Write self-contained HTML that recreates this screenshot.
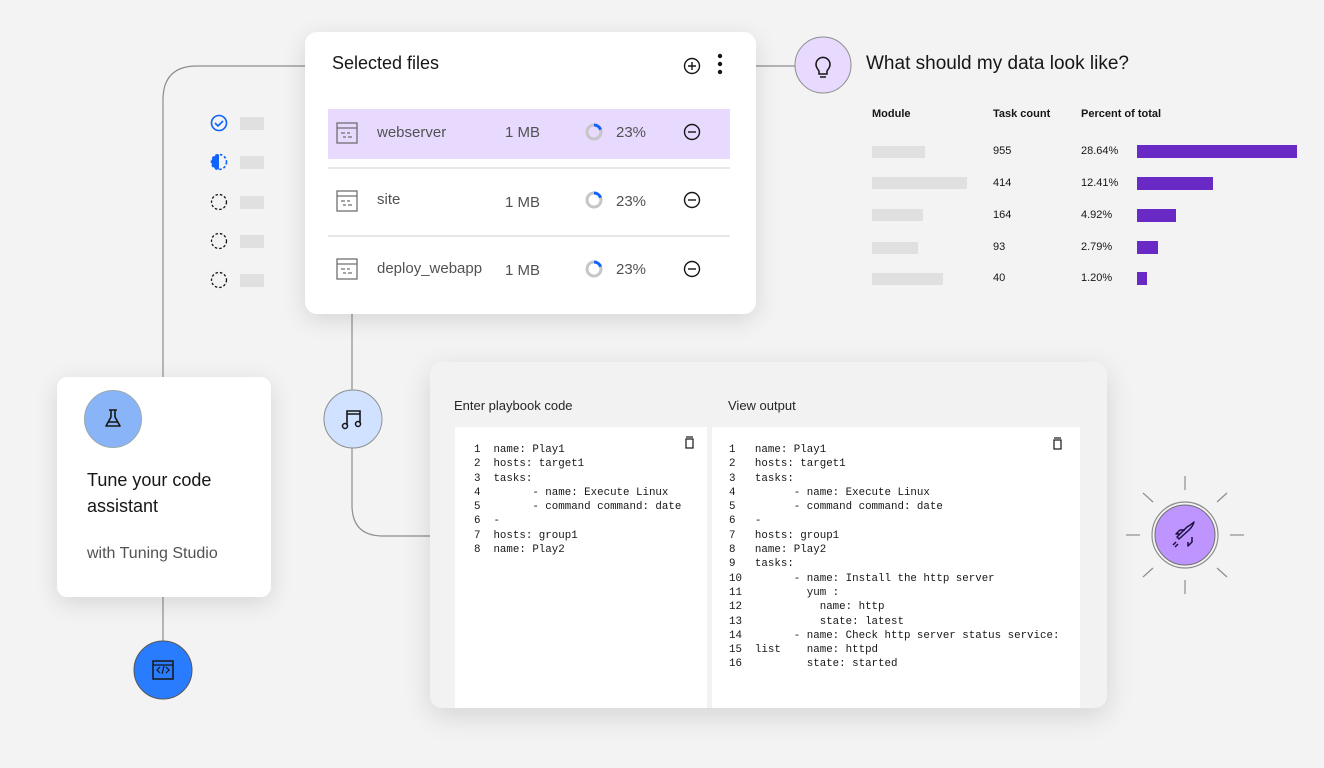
<!DOCTYPE html>
<html><head><meta charset="utf-8"><style>
*{margin:0;padding:0;box-sizing:border-box}
body{width:1324px;height:768px;background:#f3f3f3;position:relative;overflow:hidden;font-family:"Liberation Sans",sans-serif;color:#161616}
.abs{position:absolute}
.card{position:absolute;background:#fff;border-radius:12px;box-shadow:0 6px 24px rgba(0,0,0,0.12)}
.t{position:absolute;white-space:nowrap}
.code{position:absolute;font-family:"Liberation Mono",monospace;font-size:10.8px;line-height:14.3px;white-space:pre;color:#161616}
.gb{position:absolute;background:#e0e0e0;height:12px}
.pb{position:absolute;background:#6929c4;height:13px}
.ct{position:absolute;font-size:11px;color:#161616}
</style></head><body>
<svg class="abs" style="left:0;top:0" width="1324" height="768">
<g fill="none" stroke="#8d8d8d" stroke-width="1.2">
<path d="M163 377 V100 Q163 66 197 66 H305"/>
<path d="M756 66 H795"/>
<path d="M352 314 V390"/>
<path d="M352 448 V505 Q352 536 383 536 H430"/>
<path d="M163 597 V642"/>
<g stroke="#8d8d8d"><path d="M1185 476 V490"/><path d="M1185 580 V594"/><path d="M1126 535 H1140"/><path d="M1230 535 H1244"/><path d="M1143 493 L1153 502"/><path d="M1227 493 L1217 502"/><path d="M1143 577 L1153 568"/><path d="M1227 577 L1217 568"/></g>
</g>
<circle cx="823" cy="65" r="28" fill="#e8daff" stroke="#8d8d8d"/>
<path d="M817 68 a7 7 0 1 1 12 0 l-2 3 v3 h-8 v-3z M820 77 h6" fill="none" stroke="#161616" stroke-width="1.5"/>
<circle cx="353" cy="419" r="29" fill="#d0e2ff" stroke="#8d8d8d"/>
<path d="M347 425 V411 H360 V423 M347 414 H360" fill="none" stroke="#161616" stroke-width="1.6"/>
<circle cx="345" cy="426" r="2.5" fill="none" stroke="#161616" stroke-width="1.5"/><circle cx="358" cy="424" r="2.5" fill="none" stroke="#161616" stroke-width="1.5"/>
<circle cx="163" cy="670" r="29" fill="#2a7cff" stroke="#555"/>
<rect x="153" y="661" width="20" height="18" fill="none" stroke="#161616" stroke-width="1.5"/><path d="M153 665 H173 M160 667 l-3 3 3 3 M166 667 l3 3 -3 3 M164 666 l-2 8" fill="none" stroke="#161616" stroke-width="1.2"/>
<circle cx="1185" cy="535" r="33" fill="none" stroke="#8d8d8d" stroke-width="1.2"/>
<circle cx="1185" cy="535" r="30" fill="#be95ff" stroke="#6f6f6f" stroke-width="1"/>
<path d="M1177 537 l10 -10 q5 -3 7 -5 q-1 4 -5 8 l-10 9z M1180 534 l-4 0 4 -4 5 0 M1188 542 l0 4 4 -4 0 -5 M1176 542 l-3 3 M1178 544 l-3 3" fill="none" stroke="#1c1042" stroke-width="1.5" stroke-linejoin="round"/>
<circle cx="219" cy="123" r="7.5" fill="none" stroke="#0f62fe" stroke-width="1.6"/><path d="M215 123 l3 3 5 -5" fill="none" stroke="#0f62fe" stroke-width="1.6"/>
<path d="M219 154.5 a7.5 7.5 0 0 0 0 15z" fill="#0f62fe"/><circle cx="219" cy="162" r="7.5" fill="none" stroke="#0f62fe" stroke-width="1.6" stroke-dasharray="2.5 2"/>
<circle cx="219" cy="202" r="7.5" fill="none" stroke="#161616" stroke-width="1.3" stroke-dasharray="2.5 2"/>
<circle cx="219" cy="241" r="7.5" fill="none" stroke="#161616" stroke-width="1.3" stroke-dasharray="2.5 2"/>
<circle cx="219" cy="280" r="7.5" fill="none" stroke="#161616" stroke-width="1.3" stroke-dasharray="2.5 2"/>
<g fill="#e0e0e0"><rect x="240" y="117" width="24" height="13"/><rect x="240" y="156" width="24" height="13"/><rect x="240" y="196" width="24" height="13"/><rect x="240" y="235" width="24" height="13"/><rect x="240" y="274" width="24" height="13"/></g>
</svg>

<div class="card" style="left:305px;top:32px;width:451px;height:282px">
<div class="t" style="left:27px;top:21px;font-size:18px">Selected files</div>
<svg class="abs" style="left:0;top:0" width="451" height="282">
<circle cx="387" cy="34" r="7.5" fill="none" stroke="#161616" stroke-width="1.4"/><path d="M383 34h8M387 30v8" stroke="#161616" stroke-width="1.4"/>
<circle cx="415" cy="24" r="2.2" fill="#161616"/><circle cx="415" cy="32" r="2.2" fill="#161616"/><circle cx="415" cy="40" r="2.2" fill="#161616"/>
<rect x="23" y="77" width="402" height="50" fill="#e8daff"/>
<rect x="23" y="135" width="402" height="2" fill="#e8e8e8"/><rect x="23" y="203" width="402" height="2" fill="#e8e8e8"/>
<g fill="none" stroke="#6f6f6f" stroke-width="1.3">
<rect x="32" y="91" width="20" height="20"/><path d="M32 96h20M36 101h4M42 101h3M38 105h3M43 105h4"/>
<rect x="32" y="159" width="20" height="20"/><path d="M32 164h20M36 169h4M42 169h3M38 173h3M43 173h4"/>
<rect x="32" y="227" width="20" height="20"/><path d="M32 232h20M36 237h4M42 237h3M38 241h3M43 241h4"/>
</g>
<g stroke="#c6c6c6" stroke-width="3" fill="none"><circle cx="289" cy="100" r="7"/><circle cx="289" cy="168" r="7"/><circle cx="289" cy="237" r="7"/></g>
<g stroke="#0f62fe" stroke-width="3" fill="none"><path d="M289 93 a7 7 0 0 1 6.6 4.7"/><path d="M289 161 a7 7 0 0 1 6.6 4.7"/><path d="M289 230 a7 7 0 0 1 6.6 4.7"/></g>
<g fill="none" stroke="#161616" stroke-width="1.4"><circle cx="387" cy="100" r="7.5"/><path d="M383 100h8"/><circle cx="387" cy="168" r="7.5"/><path d="M383 168h8"/><circle cx="387" cy="237" r="7.5"/><path d="M383 237h8"/></g>
</svg>
<div class="t" style="left:72px;top:92px;font-size:15px;color:#525252">webserver</div>
<div class="t" style="left:72px;top:159px;font-size:15px;color:#525252">site</div>
<div class="t" style="left:72px;top:228px;font-size:15px;color:#525252">deploy_webapp</div>
<div class="t" style="left:200px;top:92px;font-size:15px;color:#525252">1 MB</div>
<div class="t" style="left:200px;top:162px;font-size:15px;color:#525252">1 MB</div>
<div class="t" style="left:200px;top:230px;font-size:15px;color:#525252">1 MB</div>
<div class="t" style="left:311px;top:92px;font-size:15px;color:#525252">23%</div>
<div class="t" style="left:311px;top:161px;font-size:15px;color:#525252">23%</div>
<div class="t" style="left:311px;top:229px;font-size:15px;color:#525252">23%</div>
</div>

<div class="t" style="left:866px;top:53px;font-size:19px">What should my data look like?</div>
<div class="ct" style="left:872px;top:108px;font-weight:bold">Module</div>
<div class="ct" style="left:993px;top:108px;font-weight:bold">Task count</div>
<div class="ct" style="left:1081px;top:108px;font-weight:bold">Percent of total</div>
<div class="gb" style="left:872px;top:146px;width:53px"></div>
<div class="gb" style="left:872px;top:177px;width:95px"></div>
<div class="gb" style="left:872px;top:209px;width:51px"></div>
<div class="gb" style="left:872px;top:242px;width:46px"></div>
<div class="gb" style="left:872px;top:273px;width:71px"></div>
<div class="ct" style="left:993px;top:145px">955</div><div class="ct" style="left:1081px;top:145px">28.64%</div><div class="pb" style="left:1137px;top:145px;width:160px"></div>
<div class="ct" style="left:993px;top:177px">414</div><div class="ct" style="left:1081px;top:177px">12.41%</div><div class="pb" style="left:1137px;top:177px;width:76px"></div>
<div class="ct" style="left:993px;top:209px">164</div><div class="ct" style="left:1081px;top:209px">4.92%</div><div class="pb" style="left:1137px;top:209px;width:39px"></div>
<div class="ct" style="left:993px;top:241px">93</div><div class="ct" style="left:1081px;top:241px">2.79%</div><div class="pb" style="left:1137px;top:241px;width:21px"></div>
<div class="ct" style="left:993px;top:272px">40</div><div class="ct" style="left:1081px;top:272px">1.20%</div><div class="pb" style="left:1137px;top:272px;width:10px"></div>

<div class="card" style="left:57px;top:377px;width:214px;height:220px;border-radius:10px">
<div class="abs" style="left:27px;top:13px;width:58px;height:58px;border-radius:50%;background:#8ab4f8;border:1px solid #9aa"></div>
<svg class="abs" style="left:44px;top:30px" width="24" height="24"><path d="M8 3h8M10 3v7l-5 9h14l-5-9V3M7 15h10" fill="none" stroke="#161616" stroke-width="1.6" stroke-linejoin="round"/></svg>
<div class="t" style="left:30px;top:90px;font-size:18px;line-height:26px;white-space:normal;width:160px">Tune your code assistant</div>
<div class="t" style="left:30px;top:168px;font-size:16px;color:#525252">with Tuning Studio</div>
</div>

<div class="abs" style="left:430px;top:362px;width:677px;height:346px;background:#f2f2f2;border-radius:12px;box-shadow:0 8px 28px rgba(0,0,0,0.13)"></div>
<div class="t" style="left:454px;top:398px;font-size:13px;color:#262626">Enter playbook code</div>
<div class="t" style="left:728px;top:398px;font-size:13px;color:#262626">View output</div>
<div class="abs" style="left:455px;top:427px;width:252px;height:281px;background:#fff"></div>
<div class="abs" style="left:712px;top:427px;width:368px;height:281px;background:#fff"></div>
<svg class="abs" style="left:684px;top:436px" width="12" height="14"><rect x="2" y="3" width="7" height="9" fill="none" stroke="#161616" stroke-width="1.2"/><path d="M2 1h7" stroke="#161616" stroke-width="1.2"/></svg>
<svg class="abs" style="left:1052px;top:437px" width="12" height="14"><rect x="2" y="3" width="7" height="9" fill="none" stroke="#161616" stroke-width="1.2"/><path d="M2 1h7" stroke="#161616" stroke-width="1.2"/></svg>
<div class="code" style="left:474px;top:443px">1  name: Play1
2  hosts: target1
3  tasks:
4        - name: Execute Linux
5        - command command: date
6  -
7  hosts: group1
8  name: Play2</div>
<div class="code" style="left:729px;top:443px">1   name: Play1
2   hosts: target1
3   tasks:
4         - name: Execute Linux
5         - command command: date
6   -
7   hosts: group1
8   name: Play2
9   tasks:
10        - name: Install the http server
11          yum :
12            name: http
13            state: latest
14        - name: Check http server status service:
15  list    name: httpd
16          state: started</div>
</body></html>
